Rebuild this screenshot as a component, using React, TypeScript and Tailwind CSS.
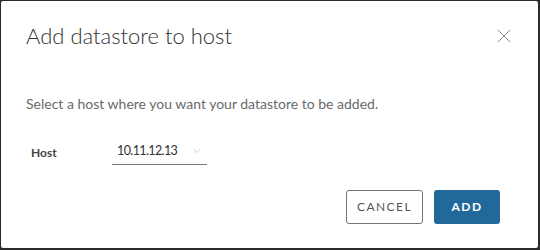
import { ChevronDown, X } from 'lucide-react';

export default function App() {
  return (
    <div className="w-[540px] h-[250px] bg-[#2b2b2b] pt-px pl-px pr-[2px] pb-[2px] font-['Lato',sans-serif]">
      <div className="h-full bg-white rounded-[2px] flex flex-col px-[25px]">
        <div className="flex items-center justify-between pt-[22px]">
          <h2 className="text-[22px] font-light text-[#313131] leading-[26px]">Add datastore to host</h2>
          <X className="w-[24px] h-[24px] text-[#8c8c8c] mr-[-3px] -mt-[1px]" strokeWidth={1} />
        </div>
        <p className="mt-[45px] text-[14px] text-[#6a6a6a] leading-[20px]">
          Select a host where you want your datastore to be added.
        </p>
        <div className="flex items-center mt-[28px] pl-[5px]">
          <span className="w-[81px] text-[12px] font-bold text-[#444]">Host</span>
          <div className="w-[95px] border-b border-[#777] flex items-center justify-between pl-[5px] pr-[4px] pb-[3px]">
            <span className="text-[12.5px] tracking-[-0.6px] text-[#333]">10.11.12.13</span>
            <ChevronDown className="w-[12px] h-[12px] text-[#aaa]" strokeWidth={1.3} />
          </div>
        </div>
        <div className="flex justify-end gap-[11px] mt-[25px] pr-[13px]">
          <button className="w-[77px] h-[34px] border border-[#747474] rounded-[3px] text-[12px] tracking-[0.12em] text-[#565656]">
            CANCEL
          </button>
          <button className="w-[66px] h-[34px] bg-[#21699b] rounded-[3px] text-[12px] font-bold tracking-[0.12em] text-white">
            ADD
          </button>
        </div>
      </div>
    </div>
  );
}
